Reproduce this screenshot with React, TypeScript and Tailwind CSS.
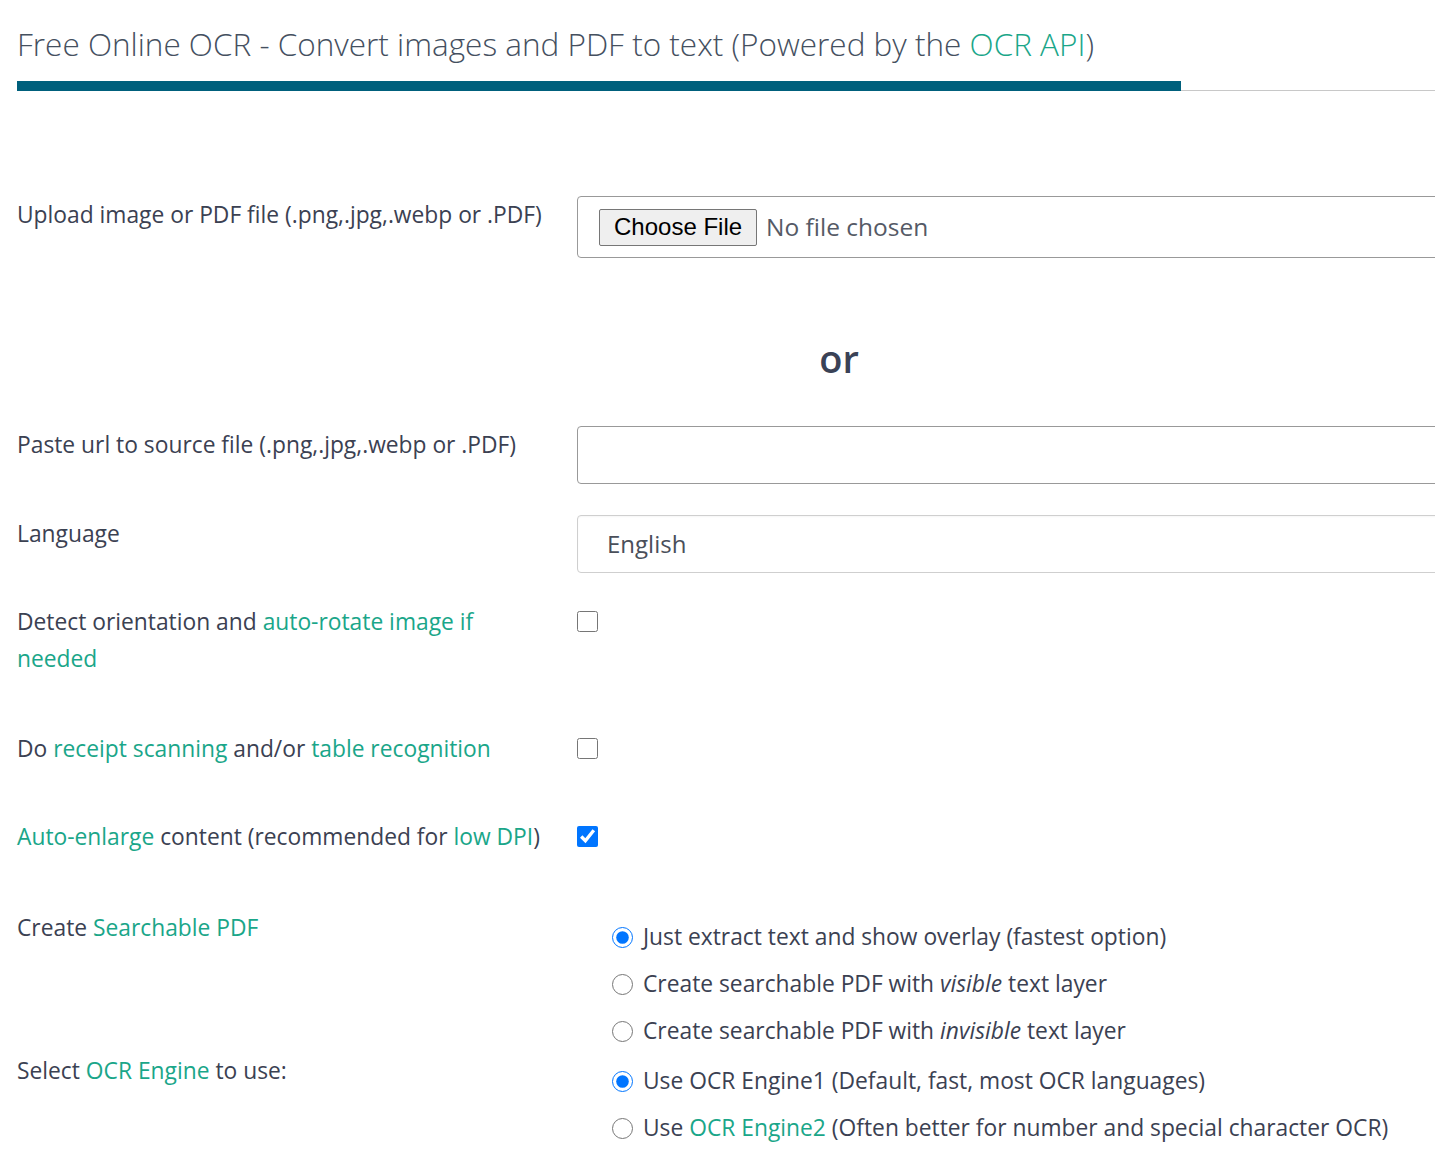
import { type ReactNode } from "react";

const G = ({ children }: { children: ReactNode }) => (
  <span className="text-[#1aa689]">{children}</span>
);

const Label = ({ children }: { children: ReactNode }) => (
  <div className="w-[560px] shrink-0 pr-[24px] text-[22.8px] leading-[37px]">{children}</div>
);

const Check = ({ checked = false }: { checked?: boolean }) => (
  <div className="flex h-[37px] items-center">
    <input
      type="checkbox"
      defaultChecked={checked}
      className="h-[21px] w-[21px] accent-[#0075ff]"
    />
  </div>
);

const Radio = ({ name, checked = false, children }: { name: string; checked?: boolean; children: ReactNode }) => (
  <label className="flex h-[47px] items-center gap-[10px] text-[22.8px]">
    <input
      type="radio"
      name={name}
      defaultChecked={checked}
      className="h-[21px] w-[21px] accent-[#0075ff]"
    />
    <span>{children}</span>
  </label>
);

export default function App() {
  return (
    <div className="min-h-screen overflow-hidden bg-white pl-[17px] font-['Open_Sans',sans-serif] text-[#3b4152]">
      {/* header */}
      <h1 className="mt-[26px] whitespace-nowrap text-[31.5px] font-light leading-[36px] text-[#45505f]">
        Free Online OCR - Convert images and PDF to text (Powered by the <G>OCR API</G>)
      </h1>
      <div className="mt-[19px] flex items-end">
        <div className="h-[10px] w-[1164px] shrink-0 bg-[#00607c]" />
        <div className="h-px flex-1 bg-[#c8c8c8]" />
      </div>

      {/* upload */}
      <div className="mt-[105px] flex">
        <Label>Upload image or PDF file (.png,.jpg,.webp or .PDF)</Label>
        <div className="flex h-[62px] w-[900px] shrink-0 items-center rounded-[4px] border border-[#999] pl-[21px]">
          <button className="h-[37px] rounded-[2px] border border-[#767676] bg-[#efefef] px-[14px] font-['Liberation_Sans',Arial,sans-serif] text-[24px] leading-none text-black">
            Choose File
          </button>
          <span className="ml-[9px] text-[24.5px] text-[#555a66]">No file chosen</span>
        </div>
      </div>

      <div className="mt-[75px] flex">
        <div className="w-[560px] shrink-0" />
        <div className="w-[524px] text-center text-[38px] font-semibold leading-[50px] text-[#3a4256]">or</div>
      </div>

      {/* url */}
      <div className="mt-[43px] flex">
        <Label>Paste url to source file (.png,.jpg,.webp or .PDF)</Label>
        <input
          type="text"
          className="h-[58px] w-[900px] shrink-0 rounded-[4px] border border-[#999] px-[29px] text-[24px] outline-none"
        />
      </div>

      {/* language */}
      <div className="mt-[31px] flex">
        <Label>Language</Label>
        <div className="flex h-[58px] w-[900px] shrink-0 items-center rounded-[4px] border border-[#cfcfcf] pl-[29px] text-[24px] text-[#4a4f5a] shadow-[inset_0_1px_2px_rgba(0,0,0,0.04)]">
          English
        </div>
      </div>

      {/* options */}
      <div className="mt-[30px] flex">
        <Label>
          Detect orientation and <G>auto-rotate image if needed</G>
        </Label>
        <Check />
      </div>

      <div className="mt-[53px] flex">
        <Label>
          Do <G>receipt scanning</G> and/or <G>table recognition</G>
        </Label>
        <Check />
      </div>

      <div className="mt-[51px] flex">
        <Label>
          <G>Auto-enlarge</G> content (recommended for <G>low DPI</G>)
        </Label>
        <Check checked />
      </div>

      <div className="mt-[54px] flex">
        <Label>
          Create <G>Searchable PDF</G>
        </Label>
        <div className="pl-[35px] pt-[5px]">
          <Radio name="pdf" checked>Just extract text and show overlay (fastest option)</Radio>
          <Radio name="pdf">
            Create searchable PDF with <i>visible</i> text layer
          </Radio>
          <Radio name="pdf">
            Create searchable PDF with <i>invisible</i> text layer
          </Radio>
        </div>
      </div>

      <div className="-mt-[3px] flex pb-[20px]">
        <Label>
          Select <G>OCR Engine</G> to use:
        </Label>
        <div className="pl-[35px] pt-[6px]">
          <Radio name="engine" checked>Use OCR Engine1 (Default, fast, most OCR languages)</Radio>
          <Radio name="engine">
            Use <G>OCR Engine2</G> (Often better for number and special character OCR)
          </Radio>
        </div>
      </div>
    </div>
  );
}
